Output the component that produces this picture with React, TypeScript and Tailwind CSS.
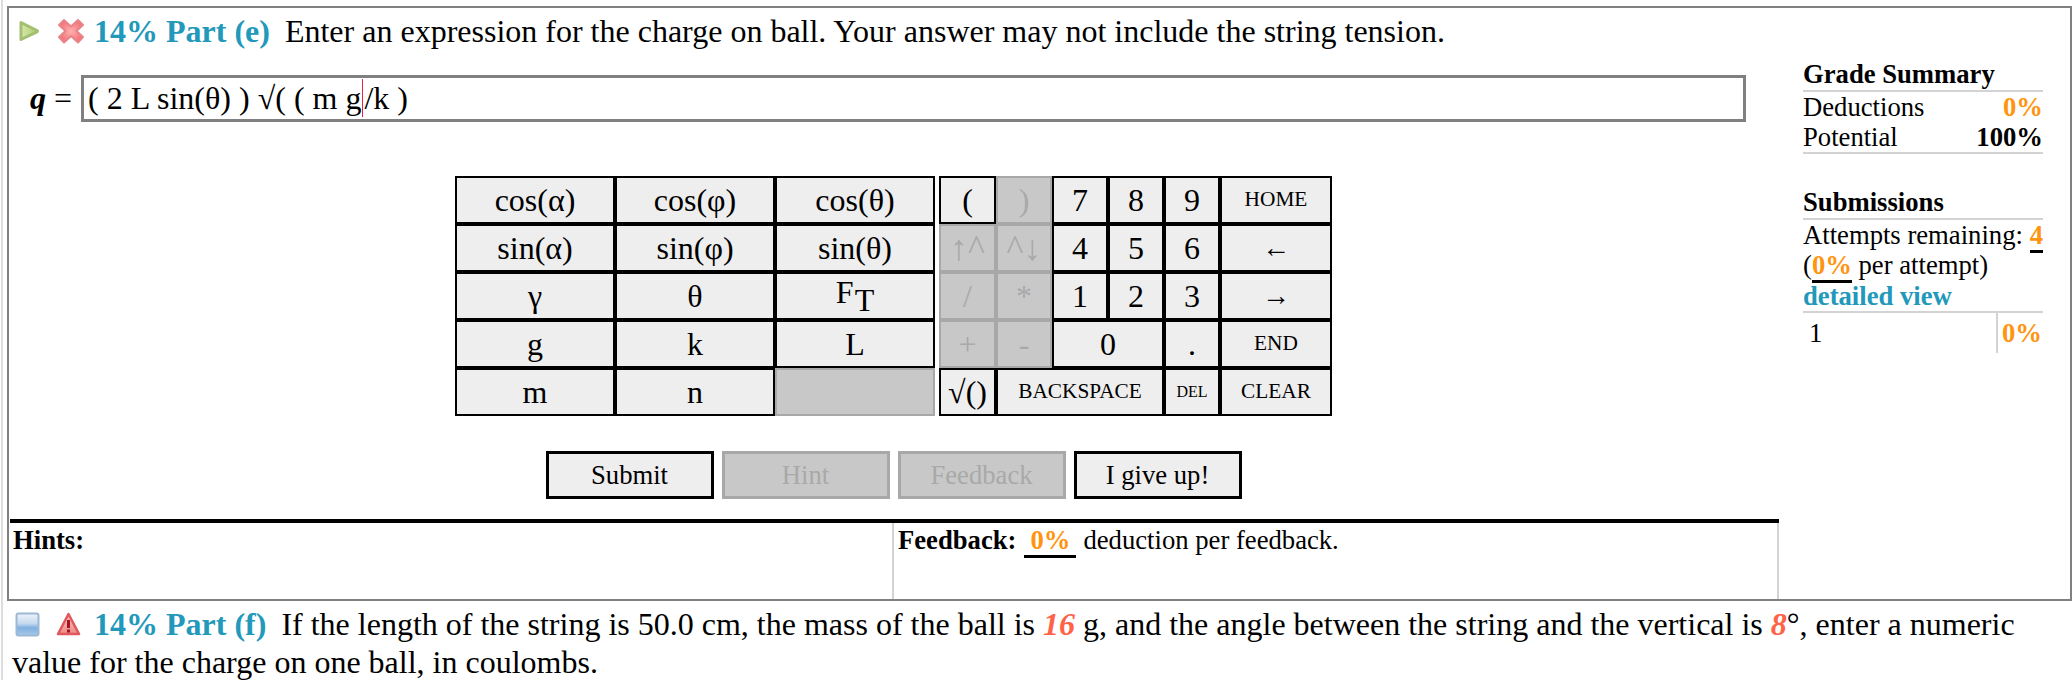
const GreenPlay = () => (
  <svg width="22" height="24" viewBox="0 0 22 24" className="shrink-0 ml-[8px]">
    <defs>
      <linearGradient id="gp" x1="0" y1="0" x2="1" y2="0">
        <stop offset="0" stopColor="#d9e8ae" />
        <stop offset="1" stopColor="#a9cc6a" />
      </linearGradient>
    </defs>
    <path d="M3 3.500 L19 11.500 Q20 12 19 12.800 L3 20.500 Z" fill="url(#gp)" stroke="#a3bf72" strokeWidth="3" strokeLinejoin="round" />
  </svg>
);

const RedCross = () => (
  <svg width="28" height="28" viewBox="0 0 28 28" className="shrink-0 ml-[17px]">
    <defs>
      <radialGradient id="rc" cx="0.5" cy="0.5" r="0.6">
        <stop offset="0" stopColor="#ffb0b0" />
        <stop offset="1" stopColor="#f06a6e" />
      </radialGradient>
    </defs>
    <path d="M7 3 L14 9.500 L21 3 L26 8 L19.500 14 L26 20 L21 25.500 L14 19 L7 25.500 L2 20 L8.500 14 L2 8 Z" fill="url(#rc)" stroke="#e8858a" strokeWidth="2" strokeLinejoin="round" />
  </svg>
);

const BlueBox = () => (
  <svg width="25" height="25" viewBox="0 0 25 25" className="shrink-0 ml-[3px]">
    <defs>
      <linearGradient id="bb" x1="0" y1="0" x2="0" y2="1">
        <stop offset="0" stopColor="#eef3fa" />
        <stop offset="0.45" stopColor="#c6d9ef" />
        <stop offset="0.65" stopColor="#7fb0e0" />
        <stop offset="1" stopColor="#a9c9ea" />
      </linearGradient>
    </defs>
    <rect x="1.500" y="1.500" width="22" height="22" rx="2" fill="url(#bb)" stroke="#9db8d4" strokeWidth="2" />
  </svg>
);

const RedWarning = () => (
  <svg width="25" height="25" viewBox="0 0 25 25" className="shrink-0 ml-[16px]">
    <defs>
      <linearGradient id="rw" x1="0" y1="0" x2="0" y2="1">
        <stop offset="0" stopColor="#f9c9c6" />
        <stop offset="1" stopColor="#ee8a88" />
      </linearGradient>
    </defs>
    <path d="M12.500 2 L23 22 L2 22 Z" fill="url(#rw)" stroke="#e0585c" strokeWidth="2.500" strokeLinejoin="round" />
    <rect x="11" y="8" width="3" height="8" fill="#a5161c" />
    <rect x="11" y="17.500" width="3" height="3" fill="#a5161c" />
  </svg>
);

type Key = { t: React.ReactNode; off?: boolean; cls?: string };

const Cell = ({ t, off, cls = "" }: Key) => (
  <button
    disabled={off}
    className={`flex h-[48px] items-center justify-center border-2 leading-none ${
      off ? "border-[#a8a8a8] bg-[#c8c8c8] text-[#a9a9a9]" : "border-black bg-[#eeeeee] text-black"
    } ${cls}`}
  >
    {t}
  </button>
);

const left: Key[] = [
  { t: "cos(α)" }, { t: "cos(φ)" }, { t: "cos(θ)" },
  { t: "sin(α)" }, { t: "sin(φ)" }, { t: "sin(θ)" },
  { t: "γ" }, { t: "θ" }, { t: <span className="flex items-start">F<span className="ml-[1px] mt-[8px]">T</span></span> },
  { t: "g" }, { t: "k" }, { t: "L" },
  { t: "m" }, { t: "n" }, { t: "", off: true },
];

const small = "text-[21.330px]";
const arrow = "text-[28px]";

const right: Key[] = [
  { t: "(" }, { t: ")", off: true }, { t: "7" }, { t: "8" }, { t: "9" }, { t: "HOME", cls: small },
  { t: "↑^", off: true, cls: "text-[36px]" }, { t: "^↓", off: true, cls: "text-[36px]" }, { t: "4" }, { t: "5" }, { t: "6" }, { t: "←", cls: arrow },
  { t: "/", off: true }, { t: "*", off: true }, { t: "1" }, { t: "2" }, { t: "3" }, { t: "→", cls: arrow },
  { t: "+", off: true }, { t: "-", off: true }, { t: "0", cls: "col-span-2" }, { t: "." }, { t: "END", cls: small },
  { t: "√()" }, { t: "BACKSPACE", cls: `col-span-3 ${small}` }, { t: "DEL", cls: "text-[16px]" }, { t: "CLEAR", cls: small },
];

const ActionButton = ({ label, off }: { label: string; off?: boolean }) => (
  <button
    disabled={off}
    className={`h-[48px] w-[168px] border-[3px] text-[26.670px] ${
      off ? "border-[#a8a8a8] bg-[#c8c8c8] text-[#a9a9a9]" : "border-black bg-[#eeeeee] text-black"
    }`}
  >
    {label}
  </button>
);

const Orange = ({ children }: { children: React.ReactNode }) => (
  <span className="border-b-[3px] border-black font-bold text-[#ff9410]">{children}</span>
);

export default function App() {
  return (
    <div className="ml-[1px] h-[680px] w-[2071px] overflow-hidden border-l-2 border-[#dddddd] bg-white font-['Liberation_Serif',serif] text-black">
      <div className="ml-[4px] mt-[6px] flex h-[595px] w-[2065px] border-2 border-[#808080] pl-[1px]">
        <main className="flex w-[1769px] flex-col">
          <div className="mt-[4px] flex h-[38px] items-center text-[32px]">
            <GreenPlay />
            <RedCross />
            <span className="ml-[9px] font-bold text-[#2299bb]">14% Part (e)</span>
            <span className="ml-[15px]">Enter an expression for the charge on ball. Your answer may not include the string tension.</span>
          </div>

          <div className="mt-[24px] flex items-center">
            <span className="ml-[20px] w-[51px] text-[32px]"><i className="font-bold">q</i> =</span>
            <div className="flex h-[47px] w-[1665px] items-center border-[3px] border-[#808080] pl-[4px] text-[32px] whitespace-pre">
              ( 2 L sin(θ) ) √( ( m g<span className="mx-[1px] h-[38px] w-[1px] bg-[#ee2244]" />/k )
            </div>
          </div>

          <div className="mt-[54px] flex justify-center gap-[4px] pr-[2px] text-[32px]">
            <div className="grid grid-cols-[160px_160px_160px]">
              {left.map((k, i) => <Cell key={i} {...k} />)}
            </div>
            <div className="grid grid-cols-[57px_56px_56px_56px_56px_112px]">
              {right.map((k, i) => <Cell key={i} {...k} />)}
            </div>
          </div>

          <div className="mt-[35px] flex justify-center gap-[8px] pr-[2px]">
            <ActionButton label="Submit" />
            <ActionButton label="Hint" off />
            <ActionButton label="Feedback" off />
            <ActionButton label="I give up!" />
          </div>

          <div className="mt-[20px] flex flex-1 border-t-4 border-black text-[26.670px]">
            <div className="w-[882px] pl-[3px] font-bold leading-[34px]">Hints:</div>
            <div className="flex-1 border-x-2 border-[#d3d3d3] pl-[4px] leading-[34px]">
              <b>Feedback:</b>
              <span className="ml-[8px] border-b-[3px] border-black px-[6px] font-bold text-[#ff9410]">0%</span>
              <span className="ml-[7px]">deduction per feedback.</span>
            </div>
          </div>
        </main>

        <aside className="ml-[24px] mt-[50px] w-[240px] text-[26.670px] leading-[30px]">
          <div className="border-b-2 border-[#d3d3d3] font-bold leading-[32px]">Grade Summary</div>
          <div className="flex justify-between"><span>Deductions</span><b className="text-[#ff9410]">0%</b></div>
          <div className="flex justify-between border-b-2 border-[#d3d3d3]"><span>Potential</span><b>100%</b></div>
          <div className="mt-[32px] border-b-2 border-[#d3d3d3] font-bold leading-[32px]">Submissions</div>
          <div className="flex justify-between"><span>Attempts remaining:</span><div><Orange>4</Orange></div></div>
          <div className="leading-[31px]">(<Orange>0%</Orange> per attempt)</div>
          <div className="border-b-2 border-[#d3d3d3] font-bold leading-[30px] text-[#2299bb]">detailed view</div>
          <div className="flex h-[40px] items-center">
            <span className="w-[193px] pl-[6px]">1</span>
            <b className="flex h-full flex-1 items-center border-l-2 border-[#d3d3d3] pl-[4px] text-[#ff9410]">0%</b>
          </div>
        </aside>
      </div>

      <div className="mt-[4px] pl-[9px] text-[32px] leading-[38px] whitespace-nowrap">
        <div className="flex h-[38px] items-center">
          <BlueBox />
          <RedWarning />
          <span className="ml-[13px] font-bold text-[#2299bb]">14% Part (f)</span>
          <span className="ml-[15px]">
            If the length of the string is 50.0 cm, the mass of the ball is <b><i className="text-[#ff6347]">16</i></b> g, and the angle between the string and the vertical is <b><i className="text-[#ff6347]">8</i></b>°, enter a numeric
          </span>
        </div>
        <div>value for the charge on one ball, in coulombs.</div>
      </div>
    </div>
  );
}
